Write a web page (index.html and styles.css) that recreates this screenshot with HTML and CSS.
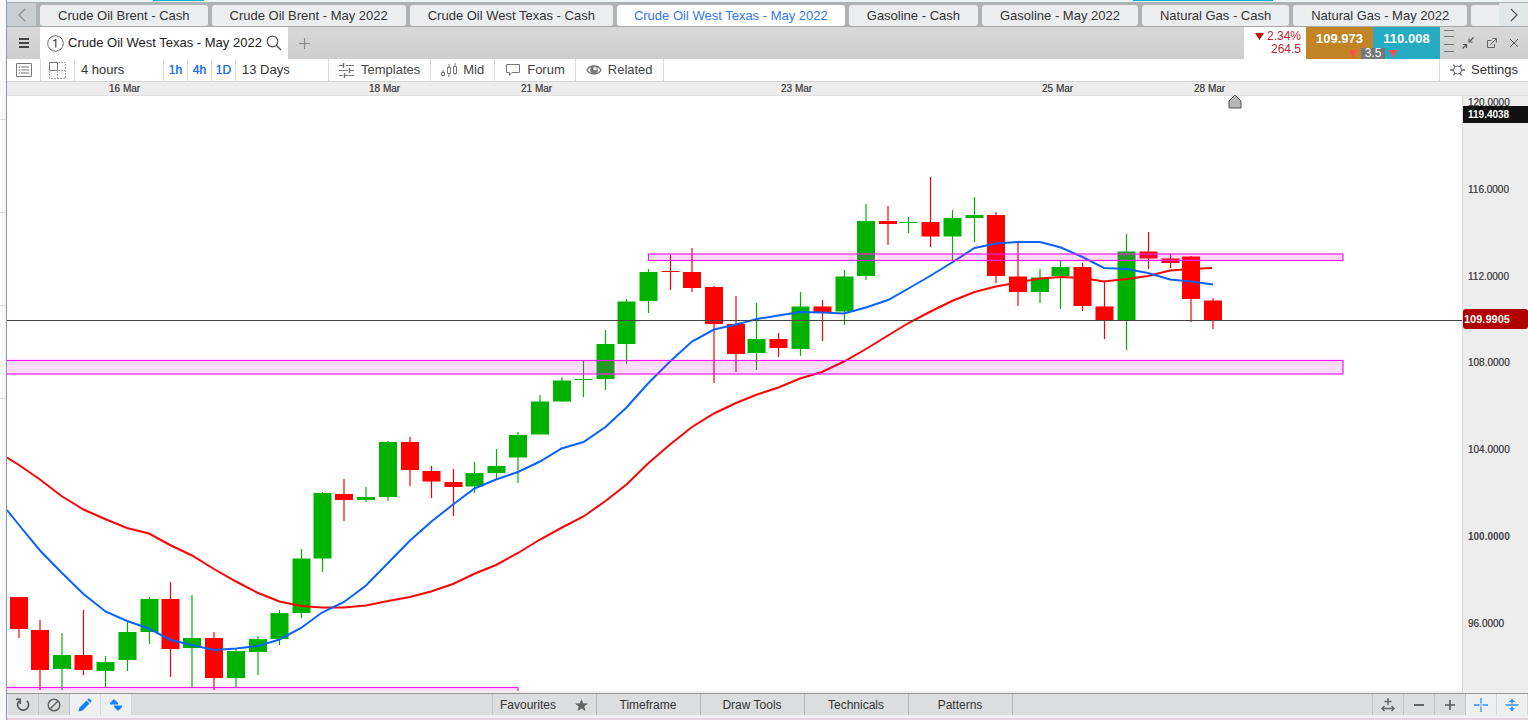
FILE: index.html
```html
<!DOCTYPE html>
<html lang="en">
<head>
<meta charset="utf-8">
<title>Crude Oil West Texas - May 2022</title>
<link rel="stylesheet" href="styles.css">
</head>
<body>
<aside class="rail"><i></i><i></i><i></i><i></i></aside>
<main class="app">
  <div class="topline"><i class="accent accent-a"></i><i class="accent accent-b"></i></div>

  <nav class="tabs">
    <button class="scroll" aria-label="Previous"><svg width="10" height="14" viewBox="0 0 10 14"><path d="M8 1 2 7l6 6" fill="none" stroke="#8d9294" stroke-width="1.3"/></svg></button>
    <div class="tablist">
      <button class="tab">Crude Oil Brent - Cash</button>
      <button class="tab">Crude Oil Brent - May 2022</button>
      <button class="tab">Crude Oil West Texas - Cash</button>
      <button class="tab current">Crude Oil West Texas - May 2022</button>
      <button class="tab">Gasoline - Cash</button>
      <button class="tab">Gasoline - May 2022</button>
      <button class="tab">Natural Gas - Cash</button>
      <button class="tab">Natural Gas - May 2022</button>
      <button class="tab" aria-label="More"></button>
    </div>
    <button class="scroll next" aria-label="Next"><svg width="10" height="14" viewBox="0 0 10 14"><path d="m2 1 6 6-6 6" fill="none" stroke="#555" stroke-width="1.2"/></svg></button>
  </nav>

  <header class="head">
    <button class="menu" aria-label="Menu"><svg width="10" height="10" viewBox="0 0 10 10"><path d="M0 1h10M0 5h10M0 9h10" stroke="#444" stroke-width="2"/></svg></button>
    <div class="product">
      <svg width="17" height="17" viewBox="0 0 17 17"><circle cx="8.500" cy="8.500" r="7.800" fill="none" stroke="#666"/><path d="M6.300 6 8.800 4.500V12.500" fill="none" stroke="#444" stroke-width="1.200"/></svg>
      <span>Crude Oil West Texas - May 2022</span>
      <svg width="16" height="16" viewBox="0 0 16 16" fill="none" stroke="#555"><circle cx="6.500" cy="6.500" r="5.300" stroke-width="1.200"/><path d="m10.500 10.500 4.500 4.500" stroke-width="1.500"/></svg>
    </div>
    <button class="add" aria-label="Add"><svg width="11" height="11" viewBox="0 0 11 11"><path d="M0 5.500h11M5.500 0v11" stroke="#888" stroke-width="1.200"/></svg></button>
    <div class="change"><span><svg width="9" height="7" viewBox="0 0 9 7"><path d="M0 0h9L4.500 7z" fill="#b80f12"/></svg> 2.34%</span><span>264.5</span></div>
    <div class="quotes">
      <button class="sell">109.973</button><button class="buy">110.008</button>
      <div class="spread"><i class="down"></i><b>3.5</b><i class="down"></i></div>
    </div>
    <svg class="grip" width="10" height="32" viewBox="0 0 10 32"><path d="M0 3.500h10M0 9.500h10M0 17.500h10M0 24.500h10" stroke="#777"/></svg>
    <div class="window">
      <button aria-label="Shrink"><svg width="12" height="12" viewBox="0 0 12 12" fill="none" stroke="#555"><path d="M11.500.500 8 4M7 1.500V5h3.500M.500 11.500 4 8M1 7.500h3.500V11" stroke-width="1.100"/></svg></button>
      <button aria-label="Pop out"><svg width="11" height="11" viewBox="0 0 11 11" fill="none" stroke="#666"><path d="M5.500 2.500h-4v7h7V6M4.500 6.500 10 1M6.500.500h4v4"/></svg></button>
      <button aria-label="Close"><svg width="10" height="10" viewBox="0 0 10 10"><path d="m1 1 8 8M9 1 1 9" stroke="#555"/></svg></button>
    </div>
  </header>

  <div class="tools">
    <button class="cell w-icon" aria-label="List"><svg width="16" height="14" viewBox="0 0 16 14" fill="none" stroke="#777"><path d="M.500.500h15v13H.500zM5 4h8M5 7h8M5 10h8M2.500 4h1.500M2.500 7h1.500M2.500 10h1.500"/></svg></button>
    <button class="cell w-icon" aria-label="Layout"><svg width="17" height="17" viewBox="0 0 17 17" fill="none" stroke="#aaa"><path d="M.500.500h8v8h-8z" stroke="#777"/><path d="M9 .500h7.500v16H.500V9M8.500 9v7M9 8.500h7" stroke-dasharray="2 1"/></svg></button>
    <button class="cell period">4 hours</button>
    <button class="cell quick">1h</button>
    <button class="cell quick">4h</button>
    <button class="cell quick">1D</button>
    <button class="cell range">13 Days</button>
    <button class="cell action"><svg width="16" height="15" viewBox="0 0 16 15" fill="none" stroke="#777"><path d="M0 2.500h5M7 2.500h8M0 7.500h9M11 7.500h4M0 12.500h4M6 12.500h9"/><path d="M4.500 0v5M10.500 5v5M5.500 10v5" stroke-width="1.500"/></svg>Templates</button>
    <button class="cell action"><svg width="16" height="14" viewBox="0 0 16 14" fill="none" stroke="#777"><path d="M.500 9.500h3v3h-3zM2 7v2.500M6.500 4.500h3v6h-3zM8 1v3.500M8 10.500V14M12.500 3.500h3v7h-3zM14 0v3.500M14 10.500V12"/></svg>Mid</button>
    <button class="cell action"><svg width="16" height="14" viewBox="0 0 16 14" fill="none" stroke="#777"><path d="M1.500 1.500h13v8H7L4.500 12.500V9.500h-3z"/></svg>Forum</button>
    <button class="cell action"><svg width="16" height="12" viewBox="0 0 16 12"><path d="M1 6c3-5.300 11-5.300 14 0-3 5.300-11 5.300-14 0z" fill="none" stroke="#777" stroke-width="1.500"/><circle cx="8" cy="6" r="3.800" fill="#777"/><circle cx="9" cy="4.700" r="1.700" fill="#fff"/></svg>Related</button>
    <button class="cell settings"><svg width="15" height="14" viewBox="0 0 15 14" fill="none" stroke="#666"><circle cx="7.500" cy="7" r="4"/><path d="M0 7h3.500M11.500 7H15M3.500 1.500l1.500 2.500M11.500 1.500 10 4M3.500 12.500 5 10M11.500 12.500 10 10" stroke-width="1.300"/></svg>Settings</button>
  </div>

  <div class="dates"><span>16 Mar</span><span>18 Mar</span><span>21 Mar</span><span>23 Mar</span><span>25 Mar</span><span>28 Mar</span></div>

  <section class="board">
    <div class="plot">
      <svg id="chart" class="chart" viewBox="7 96 1455 595" preserveAspectRatio="none" role="img" aria-label="Price chart"></svg>
      <svg class="marker" width="14" height="15" viewBox="0 0 14 15"><path d="M7 1l6 6v7H1V7z" fill="#b5b5b5" stroke="#555"/></svg>
    </div>
    <div class="prices">
      <span>120.0000</span><span>116.0000</span><span>112.0000</span><span>108.0000</span><span>104.0000</span><span class="strong">100.0000</span><span>96.0000</span>
      <b class="tag high">119.4038</b>
      <b class="tag last">109.9905</b>
    </div>
  </section>

  <footer class="foot">
    <button class="fbtn" aria-label="Reset"><svg width="14" height="14" viewBox="0 0 14 14" fill="none" stroke="#555" stroke-width="1.600"><path d="M3 3a5.500 5.500 0 1 0 8-.200M4.200 6V1.200H0"/></svg></button>
    <button class="fbtn" aria-label="Clear"><svg width="14" height="14" viewBox="0 0 14 14" fill="none" stroke="#666" stroke-width="1.500"><circle cx="7" cy="7" r="5.800"/><path d="m3 11 8-8"/></svg></button>
    <button class="fbtn lit" aria-label="Draw"><svg width="14" height="14" viewBox="0 0 14 14" fill="#0a84ff"><path d="M.500 13.500 1.500 9.500 8.500 2.500 11.500 5.500 4.500 12.500zM9.300 1.700 10.500.500c.700-.600 3.500 2 2.900 2.900L12.200 4.700z"/></svg></button>
    <button class="fbtn lit" aria-label="Sort"><svg width="12" height="12" viewBox="0 0 12 12" fill="#0a84ff"><path d="M4 0 8 4v1.500H0V4zM8 12l4-4V6.500H4V8z"/></svg></button>
    <div class="groups">
      <button class="group fav">Favourites<svg width="13" height="12" viewBox="0 0 13 12"><path d="m6.500 0 1.700 4.300 4.800.200-3.700 2.900L10.500 12l-4-2.600-4 2.600 1.200-4.600L0 4.500l4.800-.200z" fill="#666"/></svg></button>
      <button class="group">Timeframe</button>
      <button class="group">Draw Tools</button>
      <button class="group">Technicals</button>
      <button class="group">Patterns</button>
    </div>
    <button class="fbtn" aria-label="Fit"><svg width="14" height="14" viewBox="0 0 14 14" fill="none" stroke="#666" stroke-width="1.500"><path d="M7 0v7M3.500 3.500h7M1 10.500h12M3.500 8 1 10.500 3.500 13M10.500 8l2.500 2.500L10.500 13"/></svg></button>
    <button class="fbtn" aria-label="Zoom out"><svg width="10" height="10" viewBox="0 0 10 10"><path d="M0 5h10" stroke="#555" stroke-width="1.800"/></svg></button>
    <button class="fbtn" aria-label="Zoom in"><svg width="10" height="10" viewBox="0 0 10 10"><path d="M0 5h10M5 0v10" stroke="#555" stroke-width="1.600"/></svg></button>
    <button class="fbtn lit" aria-label="Crosshair"><svg width="14" height="14" viewBox="0 0 14 14"><path d="M0 7h5.500M8.500 7H14M7 0v5.500M7 8.500V14M6.500 7h1" stroke="#2d93ff" stroke-width="1.300"/></svg></button>
    <button class="fbtn lit" aria-label="Split"><svg width="14" height="14" viewBox="0 0 14 14"><path d="M.500 7h13M7 3v2.500M7 8.500V11" stroke="#2d93ff" stroke-width="1.500"/><path d="M4 4 7 .500 10 4zM4 10l3 3.500 3-3.500z" fill="#2d93ff"/></svg></button>
  </footer>
</main>
<script src="chart.js"></script>
</body>
</html>
```
FILE: styles.css
```css
* { box-sizing: border-box; }
body {
  margin: 0;
  display: flex;
  min-height: 100vh;
  background: #fff;
  color: #333;
  font: 13px/16px "Liberation Sans", Arial, sans-serif;
}
button { margin: 0; padding: 0; border: 0; background: none; color: inherit; font: inherit; }
svg { display: block; flex: none; }

.rail {
  width: 7px;
  padding-top: 27px;
  background: #f9f9f9;
  border-right: 1px solid #8a95a3;
}
.rail i { display: block; height: 93px; border-bottom: 1px solid #ddd; }
.app { flex: 1; min-width: 0; display: flex; flex-direction: column; }

.topline { display: flex; height: 3px; background: #edf2f3; border-bottom: 1px solid #a5b2b6; }
.accent { height: 1px; background: #08aed0; }
.accent-a { width: 51px; margin-left: 146px; }
.accent-b { width: 140px; margin-left: auto; margin-right: 255px; }

.tabs { display: flex; height: 24px; background: #b0b2b4; border-bottom: 1px solid #a6a8aa; }
.scroll { display: flex; align-items: center; justify-content: center; width: 29px; flex: none; background: #c9ced0; }
.scroll.next { background: #e2e8ea; }
.tablist { flex: 1; display: flex; gap: 4px; min-width: 0; overflow: hidden; padding: 2px 0 0 4px; }
.tab { flex: none; padding: 0 18px; border-radius: 3px; background: #ecedef; white-space: nowrap; }
.tab.current { padding: 0 17px; background: #fff; color: #3478f0; }

.head { display: flex; height: 32px; background: linear-gradient(#d9d9d9, #cecece); }
.menu { display: flex; align-items: center; justify-content: center; width: 33px; }
.product { display: flex; align-items: center; gap: 4px; padding: 0 6px 0 7px; background: #fff; color: #222; white-space: nowrap; }
.add { display: flex; align-items: center; justify-content: center; width: 34px; }
.change {
  display: flex;
  flex-direction: column;
  align-items: flex-end;
  justify-content: center;
  width: 62px;
  margin-left: auto;
  padding-right: 5px;
  background: #fff;
  color: #b8262b;
  font-size: 12px;
  line-height: 13px;
}
.change svg { display: inline-block; }
.quotes { position: relative; display: flex; color: #fff; font-weight: bold; }
.quotes button { width: 67px; padding-bottom: 8px; font-weight: bold; background: #c28425; }
.quotes .buy { background: #26acc2; }
.spread { position: absolute; left: 0; right: 0; bottom: 0; display: flex; align-items: center; justify-content: center; gap: 4px; }
.spread b { padding: 0 4px; background: #747679; font-size: 12px; line-height: 11px; font-weight: normal; }
.down { border: 4px solid transparent; border-top: 8px solid #ff4d4d; border-bottom: 0; }
.grip { margin: 0 4px; }
.window { display: flex; align-items: center; gap: 12px; padding: 0 9px 0 4px; }

.tools { display: flex; height: 23px; background: #fff; border-bottom: 1px solid #d4d4d4; white-space: nowrap; }
.cell { display: flex; align-items: center; justify-content: center; gap: 6px; border-right: 1px solid #ddd; }
.w-icon { width: 34px; }
.period, .range { justify-content: flex-start; padding-left: 6px; }
.period { width: 89px; }
.range { width: 93px; }
.quick { width: 24px; color: #1a73f0; font-size: 12px; text-shadow: 0 0 #1a73f0; }
.action { padding: 0 10px; color: #444; }
.settings { margin-left: auto; padding: 0 10px; border-right: 0; border-left: 1px solid #ddd; }

.dates {
  display: grid;
  grid-template-columns: 260fr 152fr 260fr 261fr 152fr 334fr;
  height: 14px;
  padding-left: 102px;
  background: #ededed;
  border-bottom: 1px solid #e0e0e0;
  color: #444;
  font-size: 10px;
  line-height: 13px;
  text-shadow: 0 0 #777;
}

.board { flex: 1; display: flex; min-height: 0; }
.plot { position: relative; flex: 1; min-width: 0; display: flex; border-bottom: 2px solid #eee; }
.chart { flex: 1; min-width: 0; height: auto; overflow: hidden; }
.marker { position: absolute; left: 84%; top: -2px; margin-left: -1px; }
.prices {
  position: relative;
  display: flex;
  flex-direction: column;
  justify-content: space-between;
  width: 66px;
  padding: 1px 0 63px 5px;
  background: #ededed;
  border-left: 1px solid #dcdcdc;
  color: #444;
  font-size: 10px;
  line-height: 12px;
  text-shadow: 0 0 #777;
}
.strong { font-weight: bold; text-shadow: none; }
.tag { position: absolute; left: 0; right: 0; color: #fff; text-shadow: none; }
.tag.high { top: 10px; padding-left: 5px; background: #111; line-height: 17px; }
.tag.last { top: 213px; padding-left: 1px; border-radius: 3px; background: #b00000; font-size: 11px; line-height: 20px; }

.foot { display: flex; height: 27px; padding: 0 0 3px 1px; background: #eeeff1; border-top: 1px solid #999; border-bottom: 2px solid #ead0de; font-size: 12px; }
.fbtn { display: flex; align-items: center; justify-content: center; width: 31px; background: #dcddde; border-right: 1px solid #c0c2c3; }
.fbtn.lit { background: #eeeff1; border-color: #d5d6d8; }
.groups { flex: 1; display: flex; justify-content: center; background: #dcddde; border-right: 1px solid #c0c2c3; }
.group { width: 104px; border-right: 1px solid #bbb; }
.fav { display: flex; align-items: center; justify-content: center; gap: 19px; width: 105px; border-left: 1px solid #c5c5c5; }
```
FILE: chart.js
```javascript
// x centre, wick top, body top, body bottom, wick bottom, direction (1 = up)
const candles = [
  [19, 597, 597, 629, 638, 0], [40, 620, 630, 670, 690, 0], [62, 633, 655, 669, 690, 1],
  [83.5, 610, 655, 670, 675, 0], [105.5, 656, 662, 671, 687, 1], [127.5, 621, 632, 660, 671, 1],
  [149.5, 597, 599, 632, 644, 1], [170.5, 582, 599, 649, 677, 0], [192, 595, 638, 648, 688, 1],
  [214, 632, 638, 678, 690, 0], [236, 649, 651, 678, 688, 1], [258, 636, 639, 652, 675, 1],
  [279.5, 610, 613, 639, 645, 1], [301.5, 549, 558.5, 613, 618, 1], [322.5, 492, 493, 558.5, 572, 1],
  [344, 479, 494, 500, 521, 0], [366, 487, 497, 500, 502, 1], [388, 441, 442, 497, 501, 1],
  [410, 437, 442, 470, 486, 0], [431.5, 466, 471, 481.5, 498, 0], [453.5, 469, 482, 487, 516, 0],
  [474.5, 462, 473, 486.5, 493, 1], [496.5, 449, 466, 473, 479, 1], [518, 432, 435, 457.5, 483, 1],
  [540, 395, 401.5, 434.5, 434, 1], [562, 377, 380.5, 401.5, 402, 1], [583.5, 360, 379, 380, 397, 1],
  [605.5, 330, 344, 379, 390, 1], [626.5, 299, 301.5, 344, 364, 1], [648.5, 269, 272, 301, 313, 1],
  [670.5, 255, 271, 272, 290, 0], [692, 248, 272, 288, 292, 0], [714, 286, 287, 324, 383, 0],
  [736, 296, 324, 354, 372, 0], [756.5, 303, 339, 353, 370, 1], [778.5, 333, 339, 348, 357, 0],
  [800.5, 292, 306.5, 349, 356, 1], [822.5, 300, 306.5, 312, 341, 0], [844.5, 270, 276.5, 311.5, 325, 1],
  [866, 204, 221, 276, 280, 1], [888, 206, 221, 224, 245, 0], [908.5, 217, 222, 223, 233, 1],
  [930.5, 177, 222, 236.5, 247, 0], [952.5, 210, 218, 236.5, 260, 1], [974.5, 197, 215, 218, 242, 1],
  [996, 212, 215, 276, 283, 0], [1018, 243, 276.5, 292, 306, 0], [1040, 269, 277.5, 292, 303, 1],
  [1060.5, 260, 267, 276, 309, 1], [1082.5, 263, 267, 306, 311, 0], [1104.5, 281, 306.5, 320, 339, 0],
  [1126.5, 234, 251.5, 320, 350, 1], [1148.5, 232, 251.5, 258.5, 269, 0], [1170.5, 254, 258.5, 263, 268, 0],
  [1191, 256, 256.5, 299, 322, 0], [1213, 298, 300.5, 320.5, 329, 0]
];

const slow = "7,457.5 19,465 40,479.5 61.5,496 83.5,509.5 105,519 127,528 149,533.5 170,545 192,555.5 214,569 236,581.5 257,592.5 279.5,601.5 301,606 322,607.5 344,607.5 366,605.5 388,601 410,597 431,591.5 453,584 475,573.5 496,565 518,553 540,539.5 562,527.5 583.5,516.5 605.5,501 626.5,484.5 648,463.5 670,444.5 692,427 714,413.5 736,403 757,394.5 778.5,387.5 800,378.5 822,372 844,361.5 866,349 888,335.5 908.5,323 930.5,311.5 952,301 974.5,292 996,286.5 1018,282.5 1040,278.5 1061,277 1082.5,278 1104,281.5 1126.5,279 1148,276 1170,270.5 1191,269 1212,268";
const fast = "7,510 19,525 40,550.5 61.5,572.5 83.5,594 105.5,611.5 127,621 149,628.5 170.5,640 192,645 214,650 236,648.5 258,646 279.5,639.5 301,628 322,612.5 344,602 366,585.5 388,563 410,540.5 431.5,521.5 453,504.5 474.5,488.5 496,479.5 518,472 540,461.5 561.5,448.5 583.5,442 605.5,427 626.5,407.5 648,383.5 670,361.5 692,341.5 714,329.5 736,324.5 757,319 778.5,315.5 800,312 822,312.5 844,313.5 866,307.5 888,300 908.5,288.5 930,276 952,262.5 974.5,248 996,243.5 1018,242 1040,242 1061,247.5 1082.5,257 1104,268 1126.5,269 1148,273 1170,279.5 1191,281.5 1213,284.5";

// left, top, right, bottom
const zones = [[648.5, 254, 1343, 260.5], [-9, 360.5, 1343, 374], [-9, 687.5, 518, 710]];

let out = "";
for (const [x, high, top, bottom, low, up] of candles) {
  const color = up ? "#00b200" : "#f00";
  out += `<path d="M${x} ${high}V${low}" stroke="${color}" stroke-width="1.2"/>`;
  out += `<rect x="${x - 9}" y="${top}" width="18" height="${bottom - top}" fill="${color}"/>`;
}
out += `<polyline points="${slow}" fill="none" stroke="#f80606" stroke-width="2"/>`;
out += `<polyline points="${fast}" fill="none" stroke="#0b62f8" stroke-width="2"/>`;
for (const [l, t, r, b] of zones) {
  out += `<rect x="${l}" y="${t}" width="${r - l}" height="${b - t}" fill="#f0f" fill-opacity=".14" stroke="#f31cf0" stroke-width="1.2"/>`;
}
out += `<path d="M7 320.5H1462" stroke="#444"/>`;
document.getElementById("chart").innerHTML = out;
```
